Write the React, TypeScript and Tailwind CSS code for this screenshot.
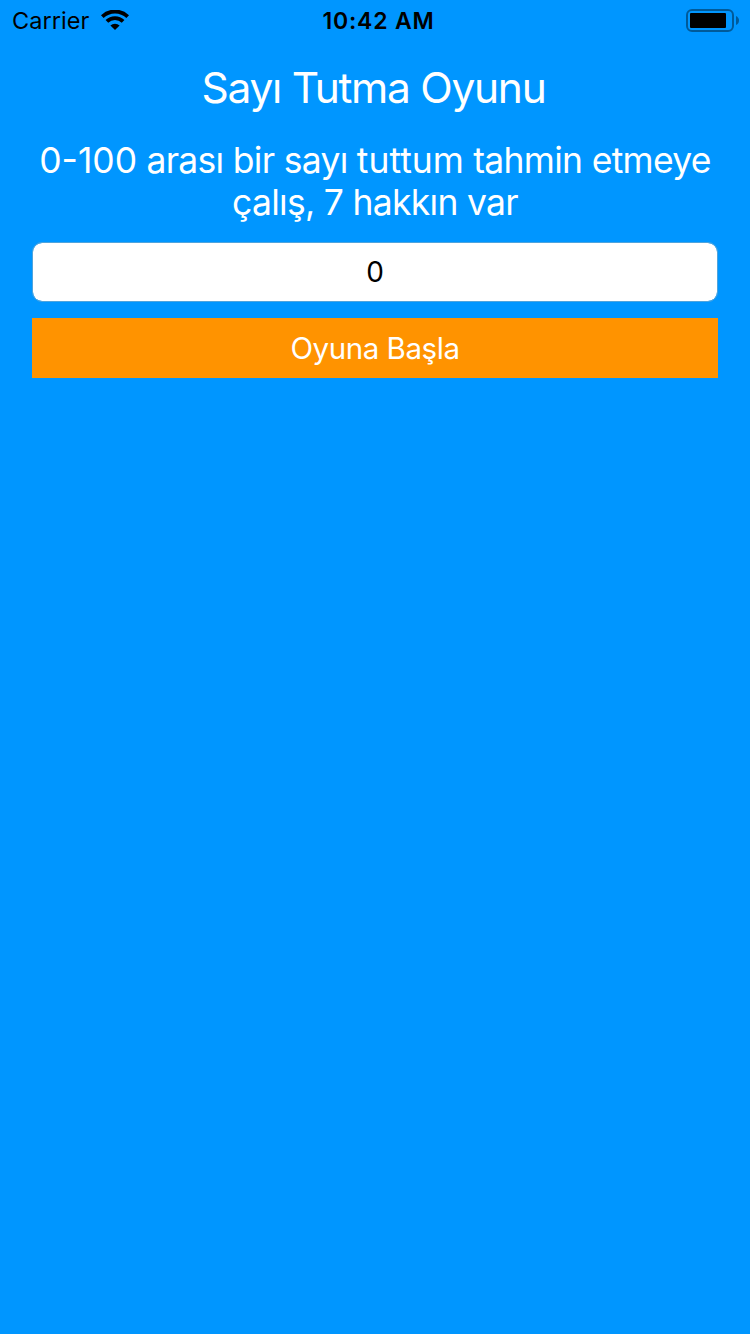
export default function App() {
  return (
    <main className="flex min-h-[1334px] w-[750px] flex-col bg-[#0096ff] font-['Inter',sans-serif]">
      <header className="grid h-10 grid-cols-3 items-center pt-px pr-[11px] pl-3 text-black">
        <div className="flex items-center gap-3">
          <span className="text-[23.5px] leading-10 tracking-[0.05px]">Carrier</span>
          <svg className="-mt-0.5" width="28" height="20" viewBox="0 0 28 20">
            <path d="M14 20 L18.6 15.6 A6.4 6.4 0 0 0 9.4 15.6 Z" />
            <path d="M5.9 11.4 A11.6 11.6 0 0 1 22.1 11.4" fill="none" stroke="black" strokeWidth="3.8" />
            <path d="M1.3 6.6 A18.3 18.3 0 0 1 26.7 6.6" fill="none" stroke="black" strokeWidth="3.8" />
          </svg>
        </div>
        <span className="pl-[6px] text-center text-[23px] leading-10 font-semibold tracking-[0.8px]">10:42 AM</span>
        <svg className="justify-self-end" width="53" height="24" viewBox="0 0 53 24">
          <rect x="1" y="1" width="46" height="21" rx="5" fill="none" stroke="black" strokeOpacity=".4" strokeWidth="2" />
          <rect x="4" y="4" width="36" height="15" rx="1" />
          <path d="M50 7 Q53 8.5 53 11.5 Q53 14.5 50 16 Z" fillOpacity=".4" />
        </svg>
      </header>
      <section className="flex flex-col px-8 text-center text-white">
        <h1 className="mt-[22px] mr-[3px] text-[42.5px] leading-[52px] tracking-[-1.3px]">Sayı Tutma Oyunu</h1>
        <p className="mt-[26px] text-[35.5px] leading-[42px] tracking-[-0.7px] whitespace-nowrap">
          <span className="tracking-[0px]">0-100</span> arası bir sayı <span className="tracking-[0px]">tuttum</span> tahmin etmeye
          <br />
          çalış, 7 hakkın var
        </p>
        <input
          className="mt-[18px] h-[60px] rounded-[10px] border border-[#4fa4dd] bg-white bg-clip-padding text-center text-[28px] text-black outline-none"
          defaultValue="0"
        />
        <button className="mt-4 h-[60px] bg-[#ff9300] pt-px text-[29.5px] leading-[59px] tracking-[-0.45px]">Oyuna Başla</button>
      </section>
    </main>
  );
}
